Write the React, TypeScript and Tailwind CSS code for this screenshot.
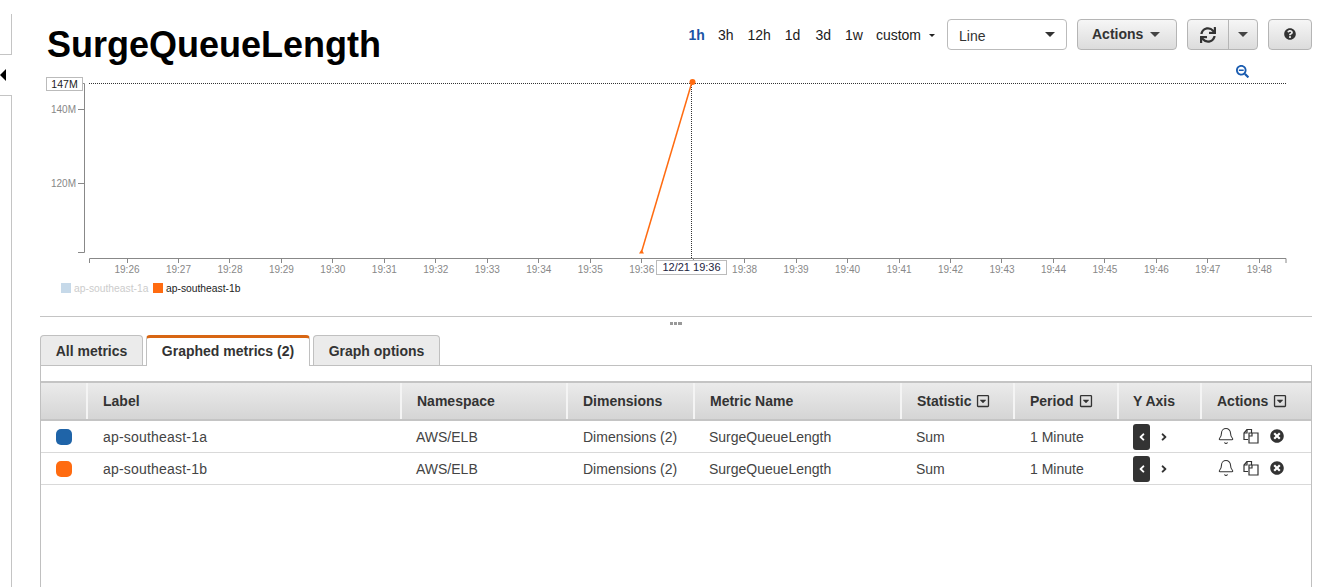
import React from 'react';
import { Bell } from 'lucide-react';
import {
  FaAngleLeft,
  FaAngleRight,
  FaQuestionCircle,
  FaRegCaretSquareDown,
  FaSearchMinus,
  FaSync,
  FaTimesCircle,
} from 'react-icons/fa';

const minutes = Array.from({ length: 23 }, (_, i) => 26 + i);

const columns = [
  { name: '', sort: false },
  { name: 'Label', sort: false },
  { name: 'Namespace', sort: false },
  { name: 'Dimensions', sort: false },
  { name: 'Metric Name', sort: false },
  { name: 'Statistic', sort: true },
  { name: 'Period', sort: true },
  { name: 'Y Axis', sort: false },
  { name: 'Actions', sort: true },
];

const rows = [
  { label: 'ap-southeast-1a', color: 'bg-[#1f64a8]' },
  { label: 'ap-southeast-1b', color: 'bg-[#ff6b10]' },
];

const gridCols = 'grid-cols-[47px_314px_166px_127px_207px_113px_104px_83px_1fr]';

function CopyIcon() {
  return (
    <svg width="16" height="16" viewBox="0 0 16 16" fill="none" stroke="#333" strokeWidth="1.2">
      <path d="M5 11.5H1V5l3-3.5h4.5V5" />
      <path d="M4 1.5V5H1" />
      <path d="M6 5h9v10H6z M9 5v3H6" />
    </svg>
  );
}

function Chart() {
  return (
    <svg width="1272" height="235" viewBox="40 70 1272 235" className="block">
      <path d="M78 83.5h6.5V252.5H78M78 109.5h6M78 183.5h6" fill="none" stroke="#888" />
      <text x="76" y="113" textAnchor="end" fontSize="10" fill="#888">140M</text>
      <text x="76" y="187" textAnchor="end" fontSize="10" fill="#888">120M</text>
      <rect x="46.5" y="77.5" width="36" height="13" fill="#fff" stroke="#bbb" />
      <text x="64.5" y="87.5" textAnchor="middle" fontSize="10.5" fill="#222">147M</text>

      <path d="M89.5 263V258.5H1286V263" fill="none" stroke="#888" />
      {minutes.map((m, i) => {
        const x = 126.5 + i * 51.47;
        return (
          <g key={m}>
            <path d={`M${Math.round(x) + 0.5} 258v5`} stroke="#888" />
            {m !== 37 && (
              <text x={x + 0.5} y="272.5" textAnchor="middle" fontSize="10" fill="#888">
                19:{m}
              </text>
            )}
          </g>
        );
      })}

      <path d="M89 83.5H1286" stroke="#333" strokeDasharray="1 1" />
      <path d="M691.5 83V258" stroke="#333" strokeDasharray="1 1" />
      <path d="M641.5 252L692 82" stroke="#ff6b10" strokeWidth="1.5" />
      <circle cx="692.5" cy="82" r="3" fill="#ff6b10" />
      <path d="M641.5 249.5L644 253.5H639z" fill="#ff6b10" />

      <rect x="656.5" y="260.5" width="70" height="14" fill="#fff" stroke="#bbb" />
      <text x="691.5" y="271" textAnchor="middle" fontSize="11" fill="#1c2340">12/21 19:36</text>

      <rect x="61" y="283" width="10" height="10" fill="#c6d9e9" />
      <text x="74" y="292" fontSize="10.3" fill="#ccc">ap-southeast-1a</text>
      <rect x="153" y="283" width="10" height="10" fill="#ff6b10" />
      <text x="166" y="292" fontSize="10.3" fill="#222">ap-southeast-1b</text>
    </svg>
  );
}

export default function App() {
  return (
    <div className="w-[1339px] h-[587px] overflow-hidden flex bg-white font-['Liberation_Sans',Arial,sans-serif] text-[#333]">
      {/* Collapsed side panel */}
      <div className="w-[12px] shrink-0 flex flex-col pt-[14px]">
        <div className="h-[41px] border-r border-b border-[#c4c4c4]" />
        <div className="h-[40px] flex items-center">
          <div className="w-0 h-0 border-y-[6px] border-y-transparent border-r-[6px] border-r-black" />
        </div>
        <div className="flex-1 border-r border-t border-[#c4c4c4]" />
      </div>

      <div className="w-[1272px] ml-[28px] shrink-0 flex flex-col relative">
        {/* Header */}
        <div className="h-[70px] flex items-start pl-[7px]">
          <h1 className="mt-[22px] text-[36px] leading-[46px] font-bold text-black">SurgeQueueLength</h1>
          <div className="ml-auto mt-[19px] flex items-center h-[31px]">
            <div className="flex items-center pt-[2px] text-[14px] text-[#1b1b1b]">
              <span className="font-bold text-[#1a54a6]">1h</span>
              <span className="ml-[13px]">3h</span>
              <span className="ml-[14px]">12h</span>
              <span className="ml-[14px]">1d</span>
              <span className="ml-[15px]">3d</span>
              <span className="ml-[14px]">1w</span>
              <span className="ml-[13px]">custom</span>
            </div>
            <span className="ml-[8px] mt-[2px] w-0 h-0 border-x-[3px] border-x-transparent border-t-[3px] border-t-[#222]" />
            <div className="ml-[12px] w-[120px] h-[31px] border border-[#bbb] rounded-[4px] flex items-center justify-between pl-[11px] pr-[11px] text-[14px] text-[#333]">
              <span className="pt-[3px]">Line</span>
              <span className="w-0 h-0 border-x-[5px] border-x-transparent border-t-[5px] border-t-[#333]" />
            </div>
            <button className="ml-[10px] w-[100px] h-[31px] border border-[#b5b5b5] rounded-[4px] bg-gradient-to-b from-[#f6f6f6] to-[#dcdcdc] flex items-center pl-[14px] gap-[7px] text-[14px] font-bold text-[#333]">
              Actions
              <span className="w-0 h-0 border-x-[5px] border-x-transparent border-t-[5px] border-t-[#444]" />
            </button>
            <div className="ml-[10px] w-[71px] h-[31px] border border-[#b5b5b5] rounded-[4px] bg-gradient-to-b from-[#f6f6f6] to-[#dcdcdc] flex">
              <div className="w-[41px] flex items-center justify-center border-r border-[#b5b5b5]">
                <FaSync size={16} color="#333" />
              </div>
              <div className="flex-1 flex items-center justify-center">
                <span className="w-0 h-0 border-x-[5px] border-x-transparent border-t-[5px] border-t-[#444]" />
              </div>
            </div>
            <button className="ml-[10px] w-[44px] h-[31px] border border-[#b5b5b5] rounded-[4px] bg-gradient-to-b from-[#f6f6f6] to-[#dcdcdc] flex items-center justify-center pb-[2px]">
              <FaQuestionCircle size={12} color="#333" />
            </button>
          </div>
        </div>

        {/* Graph */}
        <div className="relative">
          <Chart />
          <FaSearchMinus size={13} color="#1a5cb0" className="absolute left-[1196px] top-[-5px]" />
        </div>

        {/* Resize handle */}
        <div className="mt-[11px] border-t border-[#c4c4c4] h-[19px] flex justify-center pt-[5px]">
          <div className="flex gap-[1px] h-[3px]">
            <span className="w-[3px] bg-[#999]" />
            <span className="w-[3px] bg-[#999]" />
            <span className="w-[4px] bg-[#999]" />
          </div>
        </div>

        {/* Tabs */}
        <div className="flex h-[31px] relative z-10 gap-[3px]">
          <div className="w-[103px] h-[30px] pt-[2px] bg-[#ebebeb] border border-[#c0c0c0] border-b-0 rounded-t-[4px] flex items-center justify-center text-[14px] font-bold text-[#333]">
            All metrics
          </div>
          <div className="w-[164px] h-[31px] pb-[1px] bg-white border-x border-[#c0c0c0] border-t-[3px] border-t-[#d86613] rounded-t-[4px] flex items-center justify-center text-[14px] font-bold text-[#333]">
            Graphed metrics (2)
          </div>
          <div className="w-[127px] h-[30px] pt-[2px] bg-[#ebebeb] border border-[#c0c0c0] border-b-0 rounded-t-[4px] flex items-center justify-center text-[14px] font-bold text-[#333]">
            Graph options
          </div>
        </div>

        {/* Panel */}
        <div className="flex-1 -mt-px border-x border-t border-[#c0c0c0] pt-[15px]">
          <div className={`grid ${gridCols} h-[40px] bg-gradient-to-b from-[#ebebeb] to-[#d5d5d5] border-y-2 border-y-[#c4c4c4]`}>
            {columns.map((c, i) => (
              <div
                key={i}
                className={`flex items-center gap-[5px] text-[14px] font-bold text-[#333] ${i === 7 ? 'pl-[14px]' : 'pl-[15px]'} ${i < 8 ? 'border-r-2 border-r-[#f4f4f4]' : ''}`}
              >
                {c.name}
                {c.sort && <FaRegCaretSquareDown size={14} color="#333" />}
              </div>
            ))}
          </div>
          {rows.map((r) => (
            <div key={r.label} className={`grid ${gridCols} h-[32px] border-b border-[#d9d9d9] items-center text-[14px] text-[#444]`}>
              <div className="pl-[15px]">
                <div className={`w-4 h-4 rounded-[5px] ${r.color}`} />
              </div>
              <div className="pl-[15px] pt-[1px] tracking-[0.2px]">{r.label}</div>
              <div className="pl-[14px] pt-[1px]">AWS/ELB</div>
              <div className="pl-[15px] pt-[1px]">Dimensions (2)</div>
              <div className="pl-[14px] pt-[1px]">SurgeQueueLength</div>
              <div className="pl-[14px] pt-[1px]">Sum</div>
              <div className="pl-[15px] pt-[1px]">1 Minute</div>
              <div className="pl-[14px] flex items-center">
                <div className="w-[17px] h-[26px] bg-[#333] rounded-[3px] flex items-center justify-center">
                  <FaAngleLeft size={12} color="#fff" />
                </div>
                <FaAngleRight size={12} color="#333" className="ml-[8px]" />
              </div>
              <div className="pl-[15px] flex items-center pb-[1px]">
                <Bell size={18} color="#333" strokeWidth={1.4} />
                <span className="ml-[8px]"><CopyIcon /></span>
                <FaTimesCircle size={14} color="#333" className="ml-[11px]" />
              </div>
            </div>
          ))}
        </div>
      </div>
    </div>
  );
}
